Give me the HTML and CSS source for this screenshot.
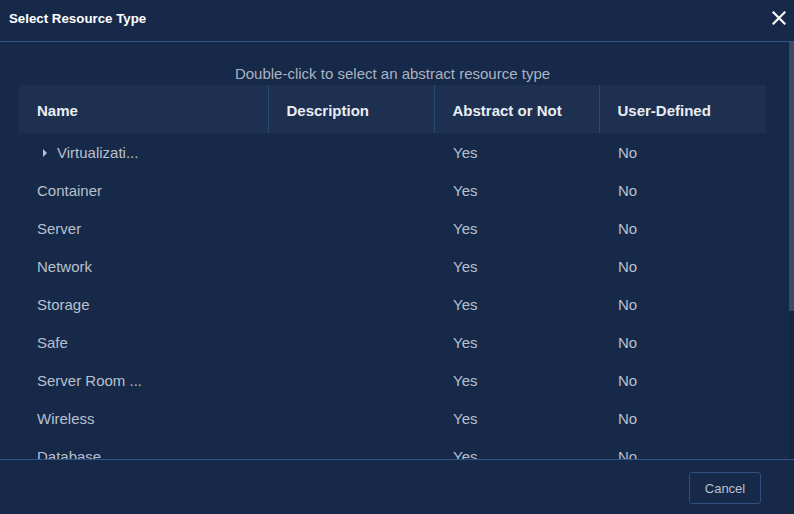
FILE: index.html
```html
<!DOCTYPE html>
<html lang="en">

<head>
    <meta charset="UTF-8">
    <meta name="viewport" content="width=device-width, initial-scale=1.0">
    <title>Select Resource Type</title>
    <link rel="stylesheet" href="styles.css">
</head>

<body>
    <div class="dialog">
        <div class="dialog-head">
            <span class="dialog-title">Select Resource Type</span>
            <span class="close-btn">
                <svg width="14" height="14" viewBox="0 0 14 14">
                    <path d="M1.5 1.5 L12.5 12.5 M12.5 1.5 L1.5 12.5" stroke="#ffffff" stroke-width="2.2" stroke-linecap="square" />
                </svg>
            </span>
        </div>
        <div class="dialog-body">
            <div class="scroll-content">
                <p class="hint">Double-click to select an abstract resource type</p>
                <table class="res-table">
                    <thead>
                        <tr>
                            <th class="col-name">Name</th>
                            <th class="col-desc">Description</th>
                            <th class="col-abs">Abstract or Not</th>
                            <th class="col-user">User-Defined</th>
                        </tr>
                    </thead>
                    <tbody>
                        <tr>
                            <td><span class="caret"></span>Virtualizati...</td>
                            <td></td>
                            <td>Yes</td>
                            <td>No</td>
                        </tr>
                        <tr><td>Container</td><td></td><td>Yes</td><td>No</td></tr>
                        <tr><td>Server</td><td></td><td>Yes</td><td>No</td></tr>
                        <tr><td>Network</td><td></td><td>Yes</td><td>No</td></tr>
                        <tr><td>Storage</td><td></td><td>Yes</td><td>No</td></tr>
                        <tr><td>Safe</td><td></td><td>Yes</td><td>No</td></tr>
                        <tr><td>Server Room ...</td><td></td><td>Yes</td><td>No</td></tr>
                        <tr><td>Wireless</td><td></td><td>Yes</td><td>No</td></tr>
                        <tr><td>Database</td><td></td><td>Yes</td><td>No</td></tr>
                    </tbody>
                </table>
            </div>
            <div class="scrollbar">
                <div class="scroll-thumb"></div>
            </div>
        </div>
        <div class="dialog-foot">
            <button class="cancel-btn">Cancel</button>
        </div>
    </div>
</body>

</html>
```

FILE: styles.css
```css
html, body {
    margin: 0;
    padding: 0;
}
body {
    background-color: #172948;
    font-family: 'Liberation Sans', Arial, sans-serif;
    color: #b7c0ce;
}
.dialog {
    width: 794px;
    height: 514px;
    display: flex;
    flex-direction: column;
    background-color: #172948;
}
.dialog-head {
    height: 42px;
    flex-shrink: 0;
    display: flex;
    align-items: center;
    justify-content: space-between;
    padding: 0 8px 0 9px;
    border-bottom: 1px solid #2f5689;
    box-sizing: border-box;
}
.dialog-title {
    font-size: 13.3px;
    font-weight: bold;
    color: #ffffff;
    margin-top: -4px;
}
.close-btn {
    display: flex;
    margin-top: -6px;
    cursor: pointer;
}
.dialog-body {
    height: 417px;
    flex-shrink: 0;
    display: flex;
    overflow: hidden;
}
.scroll-content {
    flex: 1;
    overflow: hidden;
    padding: 22px 0 0 19px;
}
.scrollbar {
    width: 5px;
    background-color: #15243f;
}
.scroll-thumb {
    height: 269px;
    background-color: #3b4969;
}
.hint {
    margin: 0 0 1px 0;
    width: 747px;
    text-align: center;
    font-size: 15px;
    line-height: 20px;
    color: #aab3c2;
}
.res-table {
    width: 747px;
    border-collapse: collapse;
    table-layout: fixed;
}
.res-table th {
    box-sizing: border-box;
    height: 48px;
    background-color: #1e3050;
    color: #e9edf3;
    font-size: 15px;
    font-weight: bold;
    text-align: left;
    padding: 2px 0 0 18px;
    border-left: 1px solid #2b4a72;
    white-space: nowrap;
}
.res-table th:first-child {
    border-left: none;
}
.res-table td {
    height: 38px;
    padding: 0 0 0 18px;
    font-size: 15px;
    white-space: nowrap;
}
.res-table td + td {
    padding-left: 19px;
}
.col-name { width: 249px; }
.col-desc { width: 166px; }
.col-abs { width: 165px; }
.caret {
    display: inline-block;
    width: 0;
    height: 0;
    border-top: 4px solid transparent;
    border-bottom: 4px solid transparent;
    border-left: 4px solid #b7c0ce;
    margin: 0 10px 1px 6px;
}
.dialog-foot {
    flex: 1;
    border-top: 1px solid #2f5689;
    display: flex;
    align-items: center;
    justify-content: flex-end;
    padding-right: 33px;
    padding-top: 2px;
}
.cancel-btn {
    width: 72px;
    height: 32px;
    background-color: transparent;
    border: 1px solid #2f4f7c;
    border-radius: 3px;
    color: #b7c0ce;
    font-family: 'Liberation Sans', Arial, sans-serif;
    font-size: 13px;
    cursor: pointer;
}
```
